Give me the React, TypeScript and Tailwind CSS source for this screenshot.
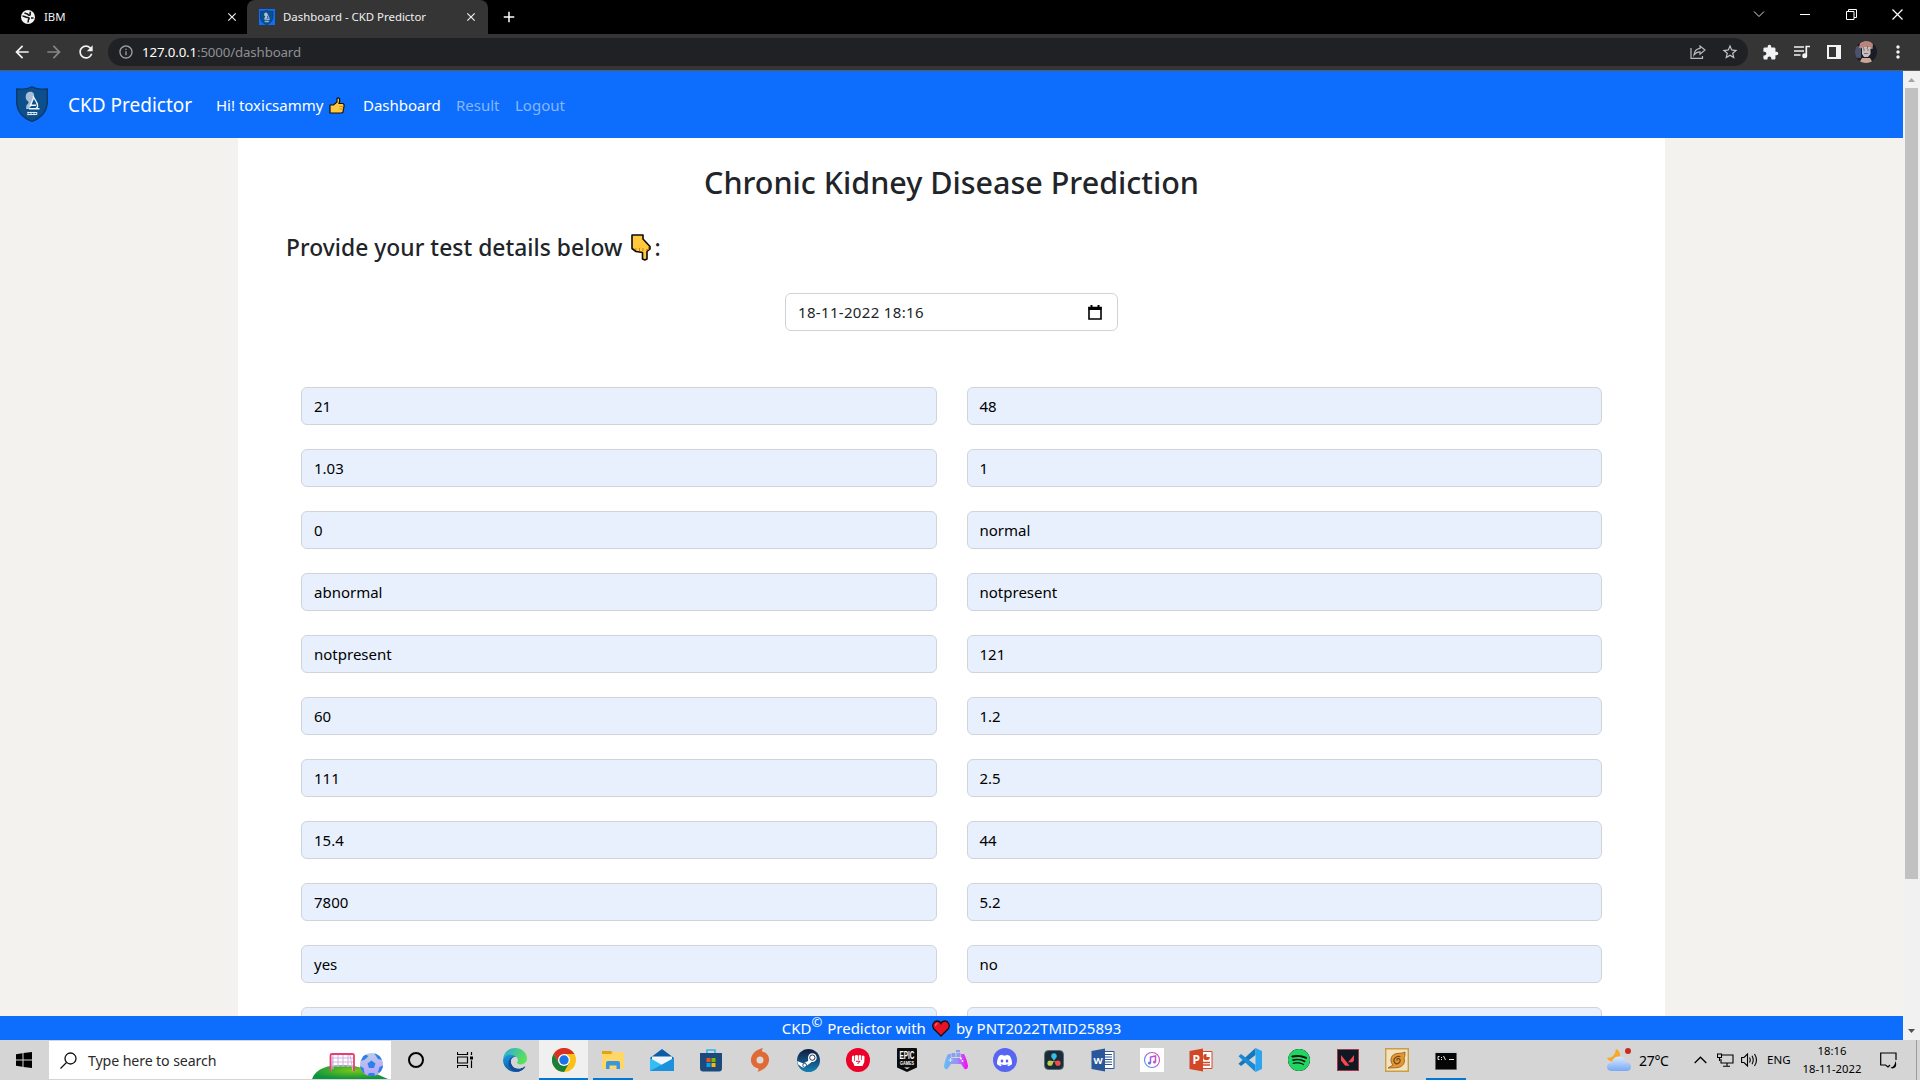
import React from 'react';
import { SiDiscord, SiSpotify, SiValorant } from 'react-icons/si';
import {
  MdArrowBack, MdArrowForward, MdRefresh, MdClose, MdAdd, MdInfoOutline, MdStarBorder,
  MdExtension, MdMoreVert,
} from 'react-icons/md';

const rows: [string, string][] = [
  ['21', '48'],
  ['1.03', '1'],
  ['0', 'normal'],
  ['abnormal', 'notpresent'],
  ['notpresent', '121'],
  ['60', '1.2'],
  ['111', '2.5'],
  ['15.4', '44'],
  ['7800', '5.2'],
  ['yes', 'no'],
  ['', ''],
];

function Logo({ className }: { className: string }) {
  return (
    <svg viewBox="0 0 32 36" className={className}>
      <path d="M16 .7 C11 3.400 5 3.300 .7 3 V16 C1 26 7 32 16 35.400 C25 32 31 26 31.300 16 V3 C27 3.300 21 3.400 16 .7Z" fill="#0d4f8b" stroke="#0a3566" strokeWidth="1.300" />
      <path d="M10.500 14 C9 11 9.500 6 14 5.800 C17.500 5.700 18.500 8 18 11 L16 15 L15.500 19 L13 23 H10 L10.500 19 C13 17.500 13.500 16 10.500 14Z" fill="#a9bdd4" />
      <path d="M17 10 L21.500 18 M17.500 12 L14 20.500 M13 22.800 H23.500 M20.500 17 Q23 20.500 20 22.500 M14.500 19.300 H20" stroke="#eef4fb" strokeWidth="1.400" fill="none" />
      <path d="M11.500 26.500 h9.500 M11.500 28.500 h9.500 M12 25.800 v3.400 M15 25.800 v3.400 M18 25.800 v3.400 M20.800 26.200 v2.600" stroke="#dfe8f3" strokeWidth="1" />
    </svg>
  );
}

function Tabs() {
  return (
    <div className="flex h-[34px] items-center bg-black text-[11.4px] text-[#f1f1f1]">
      <div className="flex h-full w-[247px] items-center pl-[21px] pr-[8px]">
        <svg viewBox="0 0 14 14" className="size-[14px]">
          <circle cx="7" cy="7" r="7" fill="#f1f3f4" />
          <path d="M1.500 6 C3.500 6 4.500 7.500 6.500 7.500 C8.500 7.500 8.500 9 7.500 9.500 L7 12.500 M3.500 2.800 C5 4.500 6 3 7 4.500 C8 6 10 5 9 3.500 L9.500 1.800 M10 8 h2.500" stroke="#111" strokeWidth="1.500" fill="none" />
        </svg>
        <span className="ml-[9px] grow">IBM</span>
        <MdClose className="size-[14px]" />
      </div>
      <div className="flex h-full w-[241px] items-center rounded-t-[8px] bg-[#353535] pl-[12px] pr-[10px]">
        <span className="flex size-4 items-center justify-center bg-[#0d6efd]"><Logo className="h-[15px]" /></span>
        <span className="ml-[8px] grow whitespace-nowrap">Dashboard - CKD Predictor</span>
        <MdClose className="size-[14px]" />
      </div>
      <MdAdd className="ml-[12px] size-[18px] text-white" />
      <div className="ml-auto flex items-center pb-[6px]">
        <svg viewBox="0 0 12 8" className="mr-[35px] h-[8px] w-[12px]"><path d="M1 1.500 L6 6.500 L11 1.500" stroke="#ddd" fill="none" /></svg>
        <span className="mr-[36px] h-px w-[10px] bg-white" />
        <svg viewBox="0 0 11 11" className="mr-[35px] size-[11px]"><path d="M.5 2.500 h7.500 v8 h-7.500z M2.500 2.500 v-2 h8 v8 h-2.500" stroke="#fff" fill="none" /></svg>
        <svg viewBox="0 0 11 11" className="mr-[17px] size-[11px]"><path d="M.5 .5 L10.500 10.500 M10.500 .5 L.5 10.500" stroke="#fff" strokeWidth="1.200" fill="none" /></svg>
      </div>
    </div>
  );
}

function Toolbar() {
  return (
    <div className="flex h-[37px] items-center border-b border-[#5b5b5b] bg-[#353535] text-[#f1f3f4]">
      <MdArrowBack className="ml-[12px] size-5" />
      <MdArrowForward className="ml-[12px] size-5 text-[#868686]" />
      <MdRefresh className="ml-[12px] size-5" />
      <div className="ml-[12px] flex h-[28px] w-[1640px] items-center rounded-full bg-[#202124] pl-[10px]">
        <MdInfoOutline className="size-4 text-[#9aa0a6]" />
        <p className="ml-[8px] grow pt-px text-[13.300px] tracking-[-0.150px] text-[#8d9094]"><span className="text-white">127.0.0.1</span>:5000/dashboard</p>
        <svg viewBox="0 0 16 14" className="mr-[15px] h-[14px] w-[16px]">
          <path d="M1 3 V13.300 H12.500 V11" stroke="#b8babd" fill="none" strokeWidth="1.200" />
          <path d="M10 1 L15 5 L10 9.200 V6.800 C7 6.800 5.500 8 4 10 C4.500 6 7 3.700 10 3.400Z" stroke="#b8babd" fill="none" strokeWidth="1.200" />
        </svg>
        <MdStarBorder className="mr-[9px] size-[18px] text-[#c4c7ca]" />
      </div>
      <MdExtension className="ml-[14px] size-[17px]" />
      <svg viewBox="0 0 17 14" className="ml-[15px] h-[14px] w-[17px]"><path d="M0 2 h10 M0 6 h10 M0 10 h6.500" stroke="#f1f3f4" strokeWidth="1.700" /><path d="M12.300 10.500 V1.500 h3.700" stroke="#f1f3f4" strokeWidth="1.700" fill="none" /><circle cx="10.700" cy="10.700" r="2.500" fill="#f1f3f4" /></svg>
      <span className="ml-[16px] flex h-[14px] w-[14px] border-2 border-r-[5px] border-[#f1f3f4]" />
      <svg viewBox="0 0 22 22" className="ml-[14px] size-[22px]">
        <defs><clipPath id="avatar"><circle cx="11" cy="11" r="11" /></clipPath></defs>
        <g clipPath="url(#avatar)">
          <rect width="22" height="22" fill="#191b25" />
          <path d="M0 5 h6 v12 h-6z" fill="#4b536c" />
          <path d="M4 7 L5 2 L9 0 H15 L18 3 L17.500 8Z" fill="#b9847a" />
          <path d="M7 6 H15.500 V13 L13 16 H9 L7 13Z" fill="#c9bebc" />
          <path d="M8 9 h2 M12 9 h2 M9 12.500 h4 M8 6 l1 2 M13 5 l-1 3" stroke="#776a72" strokeWidth="1" />
          <path d="M4 22 L7 17 H15 L18 22Z" fill="#cba697" />
        </g>
      </svg>
      <MdMoreVert className="ml-[11px] size-5" />
    </div>
  );
}

function ThumbUp() {
  return (
    <svg viewBox="0 0 16 17" className="ml-[6px] h-[17px] w-[16px]">
      <path d="M1 8 h3.500 L8 5 V1.500 Q9 .3 10.500 1.500 Q11 4 10 6.500 H14 Q15.500 7.500 15 9 L14 15 Q13.500 16 12 16 H1Z" fill="#ffc83d" stroke="#111" strokeWidth="1.200" />
      <path d="M10.500 9.500 h4 M10.500 12 h4" stroke="#d67d00" strokeWidth=".8" />
    </svg>
  );
}

function PointDown() {
  return (
    <svg viewBox="0 0 20 27" className="ml-[9px] h-[27px] w-[20px] -translate-y-[1px]">
      <path d="M1 1 H12 V5 L19 12.500 V15 L16 17.500 V25 L13.800 26 L11.500 25 V18.500 L5 17.500 L1 14.500Z" fill="#ffc83d" stroke="#0b0b0b" strokeWidth="1.600" strokeLinejoin="round" />
      <path d="M5 16 v-2 M8.500 17 v-3 M12 17 v-3 M15 15.500 h2.500 v-3" stroke="#d67d00" strokeWidth="1" fill="none" />
    </svg>
  );
}

function Navbar() {
  return (
    <nav className="flex h-[67px] shrink-0 items-center bg-[#0d6efd] pt-px text-[15px] text-white">
      <Logo className="ml-[16px] h-[36px] w-[32px] -translate-y-px" />
      <span className="ml-[20px] w-[148px] pt-px text-[19px] whitespace-nowrap">CKD Predictor</span>
      <span className="flex w-[147px] items-center whitespace-nowrap">Hi! toxicsammy<ThumbUp /></span>
      <span className="w-[93px]">Dashboard</span>
      <span className="w-[59px] text-[#86b6fe]">Result</span>
      <span className="text-[#86b6fe]">Logout</span>
    </nav>
  );
}

function Footer() {
  return (
    <footer className="flex h-[24px] shrink-0 items-center justify-center bg-[#0d6efd] text-[15px] whitespace-nowrap text-white">
      <span>CKD</span><span className="-translate-y-[5px] text-[13px]">©</span>
      <span className="ml-[5px]">Predictor with</span>
      <svg viewBox="0 0 18 17" className="mx-[6px] h-[17px] w-[18px]"><path d="M9 16 L1.500 8.500 C-.5 5 2 1 5 1 Q8 1 9 3.500 Q10 1 13 1 C16 1 18.500 5 16.500 8.500Z" fill="#e81224" stroke="#111" strokeWidth="1.300" /><path d="M3.500 6 Q3.500 3.500 5.500 3.300" stroke="#f8808a" fill="none" /></svg>
      <span className="tracking-[0.050px]">by PNT2022TMID25893</span>
    </footer>
  );
}

function Page() {
  return (
    <div className="flex h-[969px]">
      <div className="flex w-[1903px] flex-col">
        <Navbar />
        <main className="flex min-h-0 grow justify-center overflow-hidden bg-[#f3f2ee]">
          <div className="w-[1427px] bg-white text-[#212529]">
            <h1 className="mt-[24px] h-[40px] text-center text-[30.500px] leading-[40px] font-medium">Chronic Kidney Disease Prediction</h1>
            <h2 className="mt-[29px] ml-[48px] flex h-[34px] items-center text-[22.800px] tracking-[0.050px] font-medium whitespace-nowrap">Provide your test details below<PointDown /><span className="ml-[3px]">:</span></h2>
            <div className="mx-auto mt-[28px] flex h-[38px] w-[333px] items-center justify-between rounded-[6px] border border-[#ced4da] px-[12px] text-[15px]">
              <span className="tracking-[0.330px]">18-11-2022 18:16</span>
              <svg viewBox="0 0 14 15" className="mr-[3px] h-[15px] w-[14px]"><path d="M1 2.500 h12 v11.500 h-12z" fill="none" stroke="#000" strokeWidth="1.600" /><path d="M.5 2 h13 v3 h-13z M2.500 0 h2 v2 h-2z M9.500 0 h2 v2 h-2z" /></svg>
            </div>
            <div className="mt-[56px] ml-[63px] grid w-[1301px] grid-cols-2 gap-x-[30px] gap-y-[24px] text-[15px] text-black">
              {rows.flat().map((value, i) => (
                <div key={i} className="flex h-[38px] items-center rounded-[6px] border border-[#ced4da] bg-[#e8f0fe] px-[12px]">{value}</div>
              ))}
            </div>
          </div>
        </main>
        <Footer />
      </div>
      <div className="flex w-[17px] flex-col items-center bg-[#f1f1f1]">
        <svg viewBox="0 0 17 17" className="size-[17px]"><path d="M5 11 L8.500 7 L12 11Z" fill="#a3a3a3" /></svg>
        <div className="h-[791px] w-[13px] bg-[#c1c1c1]" />
        <svg viewBox="0 0 17 17" className="mt-auto size-[17px]"><path d="M5 6 L8.500 10 L12 6Z" fill="#505050" /></svg>
      </div>
    </div>
  );
}

function Edge() {
  return (
    <svg viewBox="0 0 24 24" className="size-6">
      <defs>
        <linearGradient id="edgeTop" x1="0" x2="1" y2=".4"><stop stopColor="#2aa7e0" /><stop offset="1" stopColor="#5be05a" /></linearGradient>
        <linearGradient id="edgeLow" y2="1" x2=".3"><stop stopColor="#1b9de2" /><stop offset="1" stopColor="#0c59a4" /></linearGradient>
      </defs>
      <path d="M0 11 C1 4 6 0 12 0 C19 0 24 5 24 10.500 C24 14 21 16.500 17.500 16.500 C14.500 16.500 13.500 15 14.500 13.500 C16 11 13.500 8 9.500 7.500 C5 7 1.500 9 0 11Z" fill="url(#edgeTop)" />
      <path d="M0 11.500 C2 6 9 5.500 13 8.500 C9 8.500 7 12 8.500 16 C10 20 15 22 21.500 20 C17 25 9 25 5 21.500 C1.500 19 0 16 0 11.500Z" fill="url(#edgeLow)" />
      <path d="M13 8.800 C9 9 7 12 8.500 16 C10.500 21.500 17 22 22 18 C23 19.500 19 23 15 23.800 C8 23 4 18 6 13 C7 10 10 8 13 8.800Z" fill="#124f9b" />
      <path d="M13 8.800 C10.500 9.500 9.500 12 10.500 14.500 C12 18 17 19 22.500 16.500 C22 17.500 22.500 17.500 22 18 C17 22 10.500 21.500 8.500 16 C7 12 9 9 13 8.800Z" fill="#d5d5d5" />
    </svg>
  );
}

function Chrome() {
  return (
    <svg viewBox="0 0 24 24" className="size-6">
      <circle cx="12" cy="12" r="12" fill="#fbc116" />
      <path d="M1.600 6 A12 12 0 0 1 22.400 6 H12 L6.800 15Z" fill="#d93025" />
      <path d="M1.600 6 A12 12 0 0 0 12 24 L17.200 15 H6.800Z" fill="#188038" />
      <circle cx="12" cy="12" r="6" fill="#fff" /><circle cx="12" cy="12" r="4.700" fill="#1a73e8" />
    </svg>
  );
}

function Explorer() {
  return (
    <svg viewBox="0 0 22 20" className="h-5 w-[22px]">
      <path d="M0 1 h9 l2 2 h11 v16 h-22z" fill="#e5a50a" /><path d="M0 4 H9 L11 2 H22 V19 H0Z" fill="#ffd768" />
      <path d="M4 19 V13 Q4 11 6 11 H16 Q18 11 18 13 V19 H14.500 V15.500 H7.500 V19Z" fill="#3a97dc" />
    </svg>
  );
}

function Mail() {
  return (
    <svg viewBox="0 0 24 24" className="size-6">
      <path d="M0 10 L12 1 L24 10 V14 H0Z" fill="#0b5da8" /><path d="M2 8.500 h20 v9 h-20z" fill="#eef6fc" />
      <path d="M0 10 L12 17 L24 10 V23 H0Z" fill="#36bdf3" /><path d="M0 23 L24 10 V23Z" fill="#1c92df" />
    </svg>
  );
}

function Store() {
  return (
    <svg viewBox="0 0 24 24" className="size-6">
      <path d="M8 6 V2 H16 V6" fill="none" stroke="#32b3ee" strokeWidth="1.600" />
      <path d="M1 5 H23 V20 Q23 23.500 20 23.500 H4 Q1 23.500 1 20Z" fill="#1d4a7c" />
      <path d="M7.500 10h4v4h-4z" fill="#f25022" /><path d="M12.500 10h4v4h-4z" fill="#7fba00" /><path d="M7.500 15h4v4h-4z" fill="#00a4ef" /><path d="M12.500 15h4v4h-4z" fill="#ffb900" />
    </svg>
  );
}

function Origin() {
  return (
    <svg viewBox="0 0 24 24" className="size-6">
      <path d="M15 0 C14 1.500 14 2.500 14 3.500 C19 4.500 21.500 8.500 21 12.500 C20.500 18 16 22 9.500 24 C10.500 22.500 10.500 21.500 10.500 20.500 C5 19.500 2.500 15.500 3 11 C3.500 6 8 1.500 15 0Z" fill="#e06a35" />
      <circle cx="12" cy="12" r="3.500" fill="#d9d9d9" />
    </svg>
  );
}

function Steam() {
  return (
    <svg viewBox="0 0 24 24" className="size-[23px]">
      <defs><linearGradient id="steam" y2="1" x2="0"><stop stopColor="#111a3c" /><stop offset="1" stopColor="#1581b5" /></linearGradient></defs>
      <circle cx="12" cy="12" r="12" fill="url(#steam)" />
      <path d="M.3 12.500 L6.500 15 L11.500 12.500 L12.500 8 L18 11 L14 14.500 L10 17.500 Q8 21 4.500 18.500 L1 16Z" fill="#fff" />
      <circle cx="16" cy="9" r="4.500" fill="#fff" /><circle cx="16" cy="9" r="2.800" fill="#fff" stroke="#1b2b52" strokeWidth="1" />
      <circle cx="8" cy="17" r="2" fill="none" stroke="#1c4c77" />
    </svg>
  );
}

function Fist() {
  return (
    <svg viewBox="0 0 24 24" className="size-6">
      <circle cx="12" cy="12" r="12" fill="#eb0029" />
      <path d="M6 8.500 Q7 7 8.300 8 V13 L9 13 V7.500 Q10.500 6.300 12 7.500 V12 H12.600 V7.500 Q14 6.300 15.300 7.500 V12 H16 V8 Q17.500 7 18.500 8.500 L18.300 14 L16.500 18 H8.500 L7.500 15.500 L5.800 13Z" fill="#fff" />
      <path d="M10 13.300 H14 L11.500 16" stroke="#eb0029" fill="none" />
    </svg>
  );
}

function Epic() {
  return (
    <svg viewBox="0 0 22 24" className="h-6 w-[22px]">
      <path d="M1 1 Q1 0 2 0 H20 Q21 0 21 1 V19.500 L11 24 L1 19.500Z" fill="#0c0c0c" />
      <text x="3.500" y="11" fontSize="10" fontWeight="700" textLength="15" lengthAdjust="spacingAndGlyphs" fill="#fff" fontFamily="Liberation Sans, sans-serif">EPIC</text>
      <text x="4" y="16.500" fontSize="4.500" fontWeight="700" textLength="14" lengthAdjust="spacingAndGlyphs" fill="#fff" fontFamily="Liberation Sans, sans-serif">GAMES</text>
      <path d="M8 19.500 h6 l-3 1.500z" fill="#fff" />
    </svg>
  );
}

function Gamepad() {
  return (
    <svg viewBox="0 0 24 20" className="h-5 w-6">
      <defs><linearGradient id="pad" gradientUnits="userSpaceOnUse" x2="24"><stop stopColor="#62bdf8" /><stop offset=".55" stopColor="#9a92f3" /><stop offset="1" stopColor="#ff00f5" /></linearGradient></defs>
      <path d="M4 4 H7 V8 H17 V4 H20 Q22.500 8 24 16 Q23.500 20 20.500 19 L17 14 H7 L3.500 19 Q.5 20 0 16 Q1.500 8 4 4Z" fill="url(#pad)" />
      <path d="M7.500 3 h4 v4 h-4z M12.500 3 h4 v4 h-4z M12 0 h4 v2.200 h-4z" fill="#8aa0ee" />
      <path d="M6.500 8 v4 M4.500 10 h4" stroke="#d5e4ff" strokeWidth="1.100" /><circle cx="17" cy="8.500" r=".9" fill="#fff" /><circle cx="18.500" cy="11" r=".9" fill="#fff" />
    </svg>
  );
}

function Davinci() {
  return (
    <svg viewBox="0 0 20 20" className="size-5">
      <rect x=".5" y=".5" width="19" height="19" rx="4" fill="#1e2b36" stroke="#4e7180" />
      <path d="M10 11 L7.400 6.500 H12.600Z" fill="#36bce8" /><circle cx="10" cy="6" r="2.700" fill="#36bce8" />
      <path d="M10 11 L4.800 11 L7.500 15.500Z" fill="#b7d24c" /><circle cx="6" cy="13.200" r="2.600" fill="#b7d24c" />
      <path d="M10 11 L15.200 11 L12.500 15.500Z" fill="#ef4d4b" /><circle cx="14" cy="13.200" r="2.600" fill="#ef4d4b" />
    </svg>
  );
}

function Office({ letter, color }: { letter: string; color: string }) {
  return (
    <svg viewBox="0 0 24 24" className="size-6">
      <path d="M12 3.500 H23 V20.500 H12Z" fill="#fff" stroke={color} />
      {letter === 'W' ? (
        <path d="M13 6.500 h8 M13 9 h8 M13 11.500 h8 M13 14 h8 M13 16.500 h8" stroke={color} strokeWidth="1.200" />
      ) : (
        <g><circle cx="17.500" cy="9" r="3.300" fill={color} /><path d="M17.500 9 V5 H22 V9Z" fill="#fff" /><path d="M14 14.500 h7 M14 17 h7" stroke={color} strokeWidth="1.300" /></g>
      )}
      <path d="M.5 3 L14 .5 V23.500 L.5 21Z" fill={color} />
      <text x="7.200" y="16" textAnchor="middle" fontSize={letter === 'W' ? 9.5 : 12} fontWeight="700" fill="#fff" fontFamily="Noto Sans, sans-serif">{letter}</text>
    </svg>
  );
}

function Itunes() {
  return (
    <svg viewBox="0 0 24 24" className="size-6">
      <defs><linearGradient id="itunes" gradientUnits="userSpaceOnUse" y1="4" x1="20" x2="4" y2="20"><stop stopColor="#f5478e" /><stop offset=".5" stopColor="#9460e8" /><stop offset="1" stopColor="#26b4f5" /></linearGradient></defs>
      <path d="M0 0h24v24h-24z" fill="#fff" /><circle cx="12" cy="12" r="7.500" fill="none" stroke="url(#itunes)" strokeWidth="1.100" />
      <path d="M10.500 15 V9 L15.500 8 V14" stroke="url(#itunes)" strokeWidth="1.500" fill="none" /><circle cx="9.500" cy="15" r="1.600" fill="#7b6aef" /><circle cx="14.500" cy="14" r="1.600" fill="#c45ac4" />
    </svg>
  );
}

function VsCode() {
  return (
    <svg viewBox="0 0 24 24" className="size-6">
      <path d="M17.500 0 L.5 15.800 L3 18 L17.500 7Z" fill="#1178be" />
      <path d="M17.500 24 L.5 8.200 L3 6 L17.500 17Z" fill="#1b8ad2" /><path d="M17.500 0 L24 3 V21 L17.500 24Z" fill="#2aa5f0" />
    </svg>
  );
}

function Naruto() {
  return (
    <svg viewBox="0 0 24 24" className="size-6">
      <path d="M.7 .7h22.600v22.600h-22.600z" fill="#f3e2bd" stroke="#c99f44" strokeWidth="1.400" />
      <path d="M3 20 L8 17 C4 13 6 6 12 5.500 C15 5 17 5.500 20 4 C20 7 20 8 19 10 C21 15 17 19 13 19.500 C9 20 6 20 3 20Z" fill="#e8962e" stroke="#8d5b20" strokeWidth=".8" />
      <path d="M12.500 12.500 C11 11.500 13 9.500 14.500 11 C17 14 12 17.500 9.500 14.500 C7.500 11 11 7.500 15.500 8.500" stroke="#6d4c25" strokeWidth="1.200" fill="none" />
    </svg>
  );
}

function Terminal() {
  return (
    <svg viewBox="0 0 22 19" className="h-[19px] w-[22px]">
      <path d="M0 0h22v19h-22z" fill="#8f8f8f" /><path d="M.7 2h20.600v16.300h-20.600z" fill="#050505" /><path d="M0 0h22v2h-22z" fill="#c9d0d4" />
      <path d="M4.500 5.500 h-1.500 v3 h1.500 M6.500 6 v1 M6.500 8 v1 M8.500 5 l2 4 M14 8.500 h5" stroke="#e8e8e8" fill="none" />
    </svg>
  );
}

const apps: { icon: React.ReactNode; state?: 'active' | 'open' }[] = [
  { icon: <Edge /> },
  { icon: <Chrome />, state: 'active' },
  { icon: <Explorer />, state: 'open' },
  { icon: <Mail /> },
  { icon: <Store /> },
  { icon: <Origin /> },
  { icon: <Steam /> },
  { icon: <Fist /> },
  { icon: <Epic /> },
  { icon: <Gamepad /> },
  { icon: <span className="flex size-6 items-center justify-center rounded-full bg-[#5865f2]"><SiDiscord className="size-[15px] text-white" /></span> },
  { icon: <Davinci /> },
  { icon: <Office letter="W" color="#2b579a" /> },
  { icon: <Itunes /> },
  { icon: <Office letter="P" color="#d24726" /> },
  { icon: <VsCode /> },
  { icon: <SiSpotify className="size-[22px] rounded-full bg-[#111] text-[#1ed760]" /> },
  { icon: <span className="flex size-[22px] items-center justify-center border border-[#9a3a4a] bg-[#101922]"><SiValorant className="size-[13px] text-[#fa4454]" /></span> },
  { icon: <Naruto /> },
  { icon: <Terminal />, state: 'open' },
];

function Taskbar() {
  return (
    <div className="flex h-[40px] items-center bg-[#d5d5d5] text-black">
      <div className="flex w-[49px] justify-center pr-[1px]">
        <svg viewBox="0 0 16 16" className="size-4"><path d="M0 2.200 L6.500 1.300 V7.500 H0Z M7.500 1.100 L16 0 V7.500 H7.500Z M0 8.500 H6.500 V14.700 L0 13.800Z M7.500 8.500 H16 V16 L7.500 14.900Z" /></svg>
      </div>
      <div className="flex h-[38px] w-[342px] items-center bg-white">
        <svg viewBox="0 0 17 17" className="ml-[11px] size-[17px]"><circle cx="10.500" cy="6.500" r="5.500" fill="none" stroke="#111" strokeWidth="1.300" /><path d="M6.500 10.500 L.5 16.500" stroke="#111" strokeWidth="1.300" /></svg>
        <span className="ml-[11px] pt-[2px] text-[14.200px] tracking-[-0.120px] whitespace-nowrap text-[#2b2b2b]">Type here to search</span>
        <svg viewBox="0 0 76 38" className="mr-[3px] ml-auto h-[38px] w-[76px]">
          <defs>
            <radialGradient id="hill" cx=".55" cy=".4" r=".6"><stop stopColor="#7bc715" /><stop offset="1" stopColor="#0a9540" /></radialGradient>
            <linearGradient id="ball" y2="1" x2=".2"><stop stopColor="#bcd0e6" /><stop offset="1" stopColor="#b9a5fb" /></linearGradient>
            <clipPath id="ballClip"><circle cx="59.500" cy="23.500" r="11.500" /></clipPath>
          </defs>
          <path d="M0 38 C4 27 16 24 31 24 C48 24 62 32 76 38Z" fill="url(#hill)" />
          <path d="M21 14 v14 M26 14 v12 M31 14 v12 M36 14 v12 M19 17 h23 M19 21 h23 M19 25 h23 M21 14 L19 30 M38 14 L41 30" stroke="#d3b4e2" strokeWidth="1.100" />
          <path d="M18.500 30 V14.500 Q18.500 13 20 13 H40.500 Q42 13 42 14.500 V30" fill="none" stroke="#e83f73" strokeWidth="1.800" />
          <circle cx="59.500" cy="23.500" r="11.500" fill="url(#ball)" />
          <g clipPath="url(#ballClip)">
            <path d="M59.500 19.500 L63.500 22.500 L62 27 H57 L55.500 22.500Z M52 13 L56.500 15 L53 18.500 L49 20Z M62 12 L67.500 14 L70 19 L66 18Z M48 25 L51.500 27 L52.500 32 L48 33Z M67.500 26 L72 24 L70 33 L66 31Z M57 32 h5 l2 4 h-9z" fill="#2b80ec" />
          </g>
        </svg>
      </div>
      <div className="flex w-[49px] justify-center"><span className="size-4 rounded-full border-[2.500px] border-black" /></div>
      <div className="flex w-[50px] justify-center pr-px">
        <svg viewBox="0 0 16 16" className="size-4"><path d="M.5 0 V2.500 H10.500 V0 M.5 16 V13.500 H10.500 V16 M.5 5 H10.500 V11 H.5Z M14.500 0 V3 M14.500 8.500 V16" fill="none" stroke="#000" strokeWidth="1.200" /><path d="M13 4.500h3v3h-3z" /></svg>
      </div>
      {apps.map((app, i) => (
        <div key={i} className={app.state === 'active' ? 'flex h-full w-[49px] flex-col items-center bg-[#f0f0f0]' : 'flex h-full w-[49px] flex-col items-center'}>
          <div className="flex h-[38px] items-center pt-[2px]">{app.icon}</div>
          <div className={app.state === 'active' ? 'h-[2px] w-full bg-[#0078d7]' : app.state === 'open' ? 'h-[2px] w-[40px] bg-[#0078d7]' : 'hidden'} />
        </div>
      ))}
      <div className="ml-auto flex h-full items-center">
        <svg viewBox="0 0 24 24" className="size-6">
          <defs><linearGradient id="cloud" y2="1" x2="0"><stop stopColor="#dbe9ff" /><stop offset="1" stopColor="#78a9f3" /></linearGradient></defs>
          <path d="M9 1 Q14 3 13 10 L8 13 Q3 15 0 10 Q8 10 9 1Z" fill="#f7a928" /><circle cx="21" cy="3" r="3" fill="#c92a22" />
          <path d="M5 23 Q0 23 0 19 Q0 15 4.500 15 Q6 8 12.500 8.500 Q18 9 18.500 14 Q24 14 24 19 Q24 23 19 23Z" fill="url(#cloud)" />
        </svg>
        <span className="ml-[8px] w-[55px] text-[14px] tracking-[-0.300px]">27°C</span>
        <svg viewBox="0 0 13 8" className="h-[8px] w-[13px]"><path d="M.7 7 L6.500 1.200 L12.300 7" stroke="#000" strokeWidth="1.300" fill="none" /></svg>
        <svg viewBox="0 0 17 14" className="ml-[10px] h-[14px] w-[17px]"><path d="M5 2 H16 V10 H4 V6 M10 10 V13 M6 13.300 H13 M.5 1 H4.500 V4.500 H.5Z M2.500 5 V8" stroke="#000" strokeWidth="1.100" fill="none" /></svg>
        <svg viewBox="0 0 17 14" className="ml-[7px] h-[14px] w-[17px]"><path d="M.6 4.500 H3 L6.500 1 V13 L3 9.500 H.6Z M8.500 4.500 Q10 7 8.500 9.500 M11 2.800 Q13.500 7 11 11.200 M13.500 1 Q17.500 7 13.500 13" stroke="#000" strokeWidth="1.100" fill="none" /></svg>
        <span className="ml-[9px] w-[24px] text-[11.500px]">ENG</span>
        <div className="ml-[10px] flex w-[62px] flex-col items-center text-[11.300px] leading-[18px] whitespace-nowrap"><span>18:16</span><span>18-11-2022</span></div>
        <svg viewBox="0 0 17 17" className="ml-[17px] size-[17px]"><path d="M10 13 L8 15 L5.500 13 H.7 V1 H16 V8" stroke="#000" strokeWidth="1.200" fill="none" /><path d="M10.500 15.500 Q14.500 15 15.500 9 Q17.500 14.500 14 16 Q12 17 10.500 15.500Z" /></svg>
        <span className="ml-[19px] mr-[3px] h-full w-px bg-[#9c9c9c]" />
      </div>
    </div>
  );
}

export default function App() {
  return (
    <div className="flex h-[1080px] w-[1920px] flex-col overflow-hidden font-['Noto_Sans','Open_Sans',sans-serif]">
      <Tabs />
      <Toolbar />
      <Page />
      <Taskbar />
    </div>
  );
}
